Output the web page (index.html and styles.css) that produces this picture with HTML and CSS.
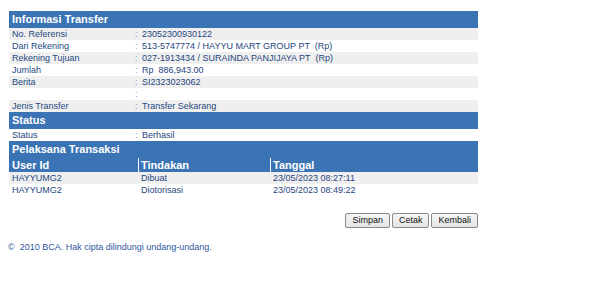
FILE: index.html
```html
<!DOCTYPE html>
<html lang="id">

<head>
    <meta charset="UTF-8">
    <meta name="viewport" content="width=device-width, initial-scale=1.0">
    <title>Informasi Transfer</title>
    <link rel="stylesheet" href="styles.css">
</head>

<body>
    <div class="page">
        <table class="info">
            <colgroup>
                <col class="col-label">
                <col>
            </colgroup>
            <tr>
                <td colspan="2" class="head">Informasi Transfer</td>
            </tr>
            <tr class="alt">
                <td class="label">No. Referensi</td>
                <td class="value"><span class="colon">:</span>23052300930122</td>
            </tr>
            <tr>
                <td class="label">Dari Rekening</td>
                <td class="value"><span class="colon">:</span>513-5747774 / HAYYU MART GROUP PT &nbsp;(Rp)</td>
            </tr>
            <tr class="alt">
                <td class="label">Rekening Tujuan</td>
                <td class="value"><span class="colon">:</span>027-1913434 / SURAINDA PANJIJAYA PT &nbsp;(Rp)</td>
            </tr>
            <tr>
                <td class="label">Jumlah</td>
                <td class="value"><span class="colon">:</span>Rp &nbsp;886,943.00</td>
            </tr>
            <tr class="alt">
                <td class="label">Berita</td>
                <td class="value"><span class="colon">:</span>SI2323023062</td>
            </tr>
            <tr>
                <td class="label"></td>
                <td class="value"><span class="colon">:</span></td>
            </tr>
            <tr class="alt">
                <td class="label">Jenis Transfer</td>
                <td class="value"><span class="colon">:</span>Transfer Sekarang</td>
            </tr>
            <tr>
                <td colspan="2" class="head">Status</td>
            </tr>
            <tr>
                <td class="label">Status</td>
                <td class="value"><span class="colon">:</span>Berhasil</td>
            </tr>
        </table>

        <table class="info pelaksana">
            <colgroup>
                <col class="col-user">
                <col class="col-aksi">
                <col>
            </colgroup>
            <tr>
                <td colspan="3" class="head">Pelaksana Transaksi</td>
            </tr>
            <tr>
                <td class="head sub-first">User Id</td>
                <td class="head sub">Tindakan</td>
                <td class="head sub">Tanggal</td>
            </tr>
            <tr class="alt">
                <td class="label">HAYYUMG2</td>
                <td class="cell">Dibuat</td>
                <td class="cell">23/05/2023 08:27:11</td>
            </tr>
            <tr>
                <td class="label">HAYYUMG2</td>
                <td class="cell">Diotorisasi</td>
                <td class="cell">23/05/2023 08:49:22</td>
            </tr>
        </table>

        <div class="buttons">
            <button type="button">Simpan</button>
            <button type="button">Cetak</button>
            <button type="button">Kembali</button>
        </div>
    </div>

    <p class="footer">&copy; &nbsp;2010 BCA. Hak cipta dilindungi undang-undang.</p>
</body>

</html>
```

FILE: styles.css
```css
/* dasar */

body {
    margin: 0;
    font-family: "Liberation Sans", Arial, sans-serif;
    color: #1f4680;
    background: #fff;
}

.page {
    width: 469px;
    padding: 11px 0 0 9px;
}

/* tabel informasi */

.info {
    width: 469px;
    table-layout: fixed;
    border-collapse: separate;
    border-spacing: 0;
    font-size: 9px;
}

.info col.col-label {
    width: 126px;
}

.info td {
    padding: 0 0 0 3px;
    height: 12px;
    line-height: 12px;
    white-space: nowrap;
    overflow: hidden;
}

.info tr.alt td {
    background: #efefef;
}

.info td.head {
    background: #3b74b4;
    color: #fff;
    font-weight: bold;
    font-size: 11px;
    height: 17px;
    line-height: 17px;
}

.info td.label {
    color: #24497f;
}

.info td.value {
    padding-left: 0;
}

.info td.value .colon {
    display: inline-block;
    width: 7px;
    color: #8a98b0;
}

/* tabel pelaksana */

.pelaksana col.col-user {
    width: 129px;
}

.pelaksana col.col-aksi {
    width: 132px;
}

.pelaksana td.sub,
.pelaksana td.sub-first {
    height: 14px;
    line-height: 14px;
}

.pelaksana td.sub {
    border-left: 1px solid #fff;
    padding-left: 2px;
}

.pelaksana td.cell {
    padding-left: 3px;
}

/* tombol */

.buttons {
    display: flex;
    justify-content: flex-end;
    gap: 2px;
    margin-top: 17px;
}

.buttons button {
    font-family: "Liberation Sans", Arial, sans-serif;
    font-size: 9px;
    color: #111;
    background: linear-gradient(#f6f6f6, #e4e4e4);
    border: 1px solid #8a8a8a;
    border-radius: 2px;
    height: 15px;
    padding: 0 6px;
    line-height: 13px;
}

.footer {
    margin: 14px 0 0 8px;
    font-size: 9px;
    color: #2f56a0;
}
```
